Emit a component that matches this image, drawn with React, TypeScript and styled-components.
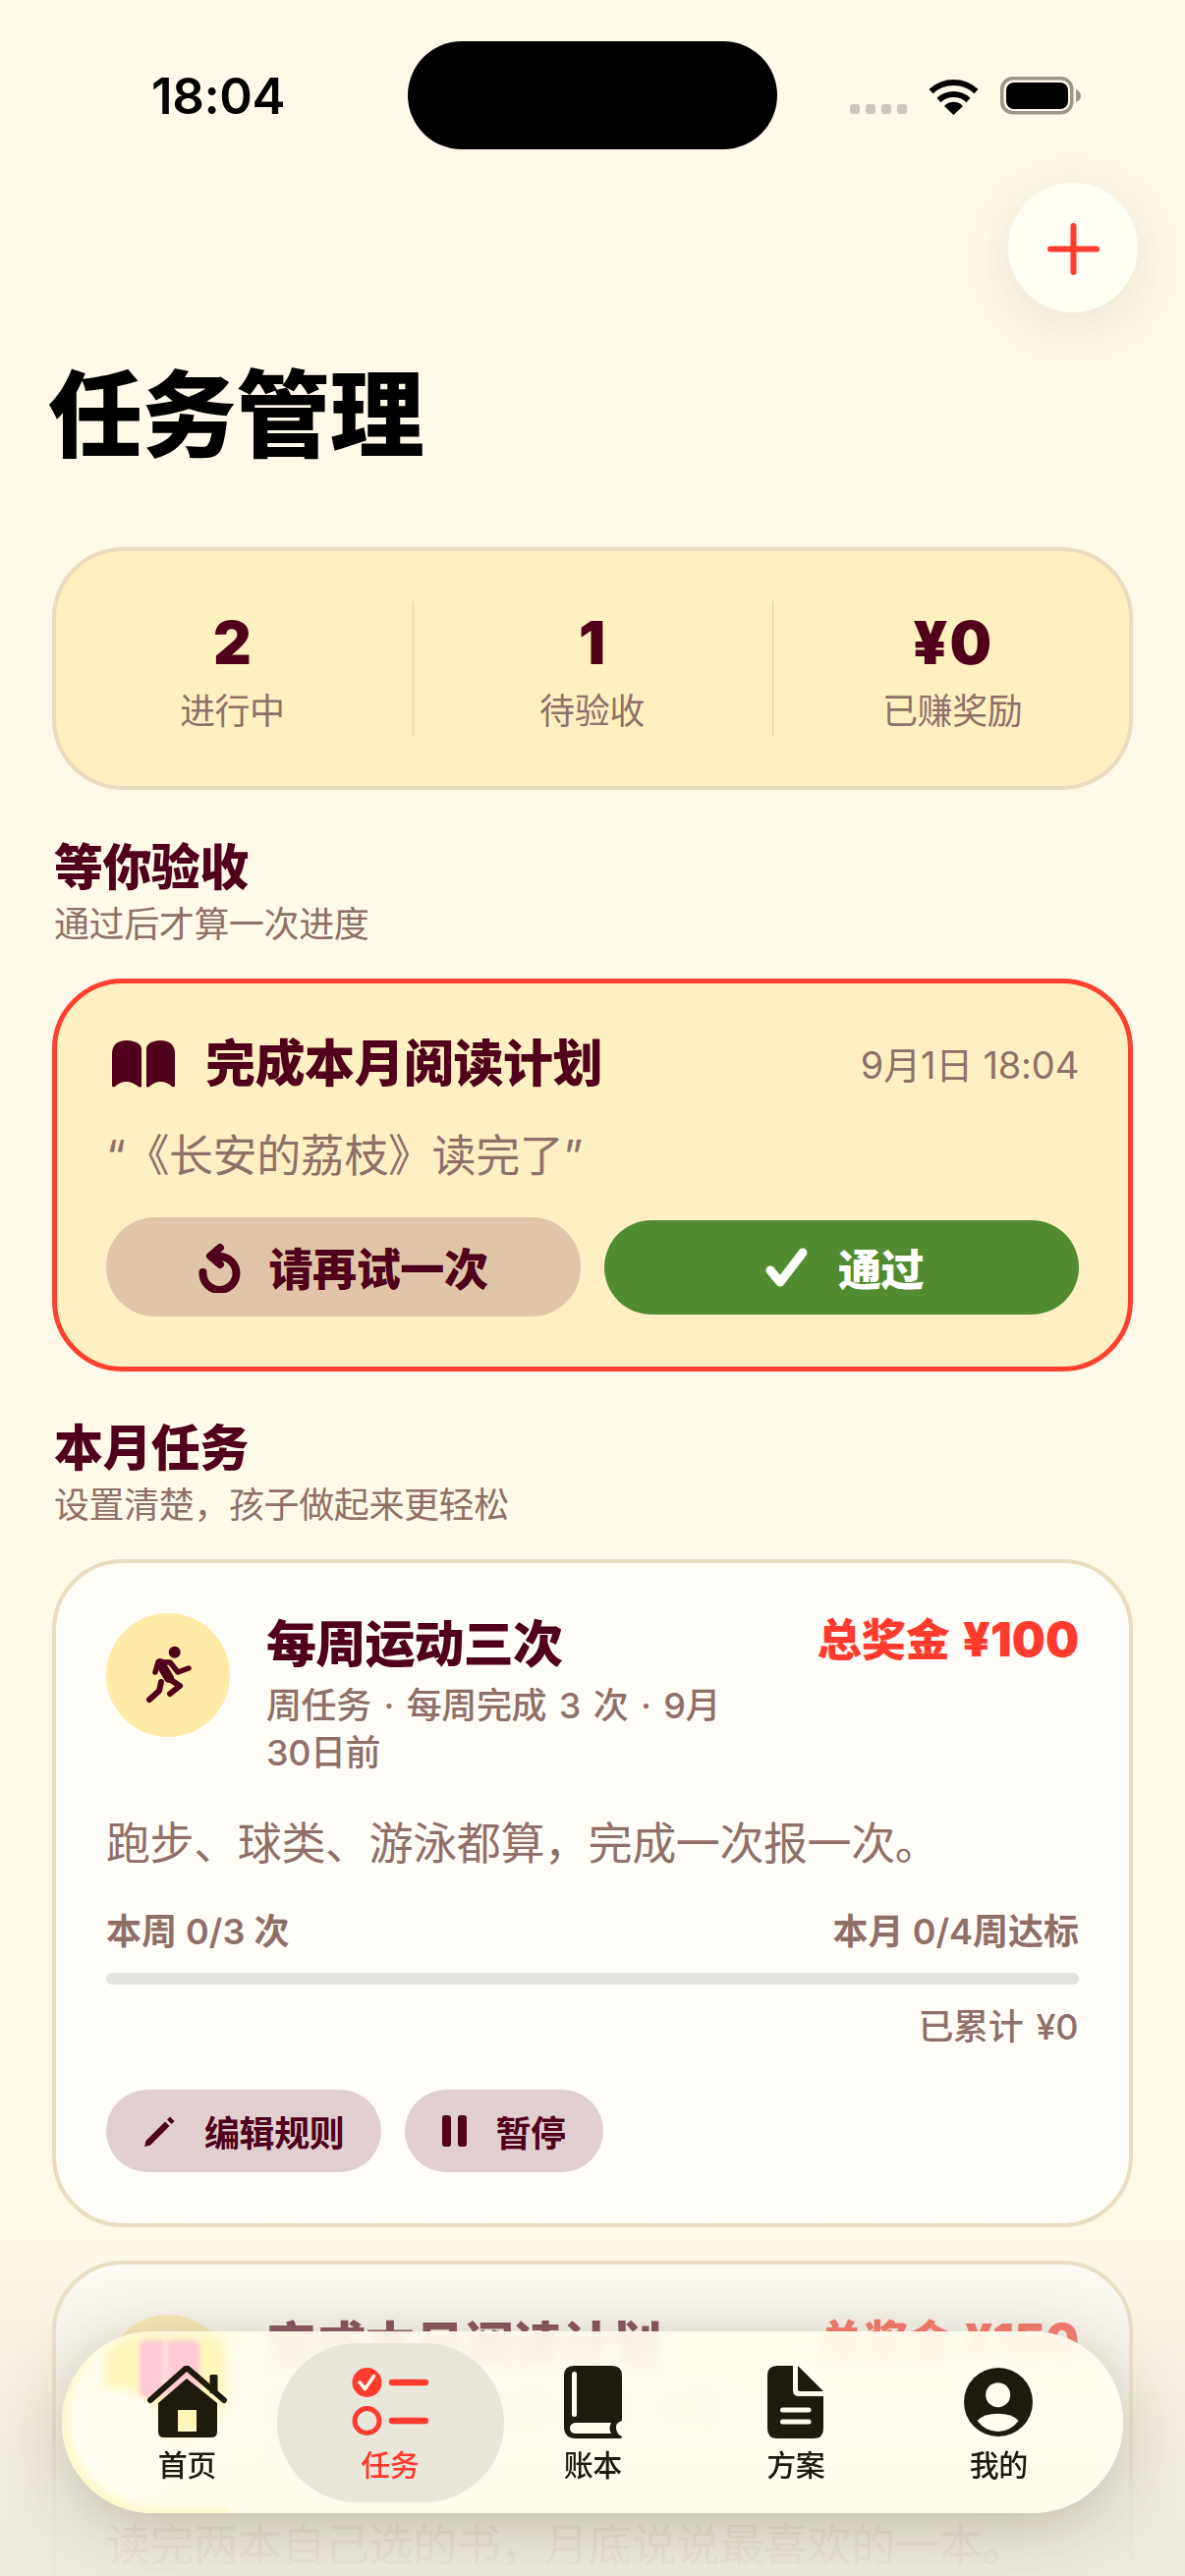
import styled, { createGlobalStyle } from "styled-components";

const maroon = "#50001a";
const muted = "#8f7068";
const red = "#ff3b30";
const ink = "#1f1a0e";
const glass = "#fffcee";

const GlobalStyle = createGlobalStyle`
  html, body {
    margin: 0;
    padding: 0;
    background: #fff9ea;
  }
  * {
    box-sizing: border-box;
  }
`;

const Page = styled.div`
  position: relative;
  width: 1206px;
  height: 2622px;
  overflow: hidden;
  background: #fff9ea;
  font-family: Inter, "Noto Sans CJK SC", sans-serif;
  letter-spacing: -0.4px;
  text-spacing-trim: space-all;
`;

const StatusBar = styled.div`
  display: grid;
  grid-template-columns: 415px 376px 1fr;
  align-items: center;
  height: 110px;
  margin-top: 42px;
`;

const Time = styled.div`
  padding-left: 154px;
  font-size: 51px;
  font-weight: 600;
  color: #000;
  letter-spacing: -0.4px;
`;

const Island = styled.div`
  height: 110px;
  border-radius: 55px;
  background: #000;
`;

const StatusIcons = styled.div`
  display: flex;
  align-items: flex-end;
  padding-left: 74px;
  height: 39px;
`;

const Dots = styled.div`
  display: flex;
  gap: 6px;
  margin-right: 22px;
  margin-bottom: 1px;
`;

const Dot = styled.span`
  width: 10px;
  height: 10px;
  border-radius: 3px;
  background: #cbc7ba;
`;

const Battery = styled.svg`
  margin-left: 22px;
  display: block;
`;

const Header = styled.div`
  display: flex;
  justify-content: flex-end;
  padding: 34px 48px 0 0;
`;

const AddButton = styled.button`
  display: flex;
  align-items: center;
  justify-content: center;
  width: 132px;
  height: 132px;
  padding: 0;
  border: 0;
  border-radius: 50%;
  background: #fffef2;
  box-shadow: 0 12px 54px rgba(90, 70, 30, 0.12);
`;

const PageTitle = styled.h1`
  margin: 47px 0 0 49px;
  font-size: 96px;
  line-height: 115px;
  font-weight: 900;
  letter-spacing: -0.4px;
  color: #000;
`;

const Content = styled.div`
  padding: 0 53px;
`;

const StatsCard = styled.div`
  display: grid;
  grid-template-columns: repeat(3, 1fr);
  margin-top: 77px;
  height: 247px;
  padding: 55px 0;
  border-radius: 72px;
  background: #fef0bf;
  box-shadow: inset 0 0 0 4px #e9dcc0;
`;

const Stat = styled.div<{ $divided?: boolean }>`
  display: flex;
  flex-direction: column;
  align-items: center;
  padding: 12px ${(p) => (p.$divided ? "2px" : "0")} 0 0;
  border-left: ${(p) => (p.$divided ? "1px solid #dccfae" : "0")};
`;

const StatValue = styled.div`
  padding-left: 2px;
  font-size: 60px;
  line-height: 60px;
  font-weight: 900;
  letter-spacing: 2px;
  color: ${maroon};
`;

const StatLabel = styled.div`
  margin-top: 18px;
  font-size: 36px;
  line-height: 44px;
  color: ${muted};
`;

const Section = styled.div<{ $top: number }>`
  margin-top: ${(p) => p.$top}px;
  padding-left: 2px;
`;

const SectionTitle = styled.h2`
  margin: 0;
  font-size: 50px;
  line-height: 60px;
  font-weight: 900;
  letter-spacing: -0.6px;
  color: ${maroon};
`;

const SectionHint = styled.div`
  margin-top: 6px;
  font-size: 36px;
  line-height: 44px;
  color: ${muted};
`;

const ReviewCard = styled.div`
  margin-top: 33px;
  height: 400px;
  padding: 52px 50px 0;
  border: 5px solid #ff4030;
  border-radius: 72px;
  background: #fef0c2;
`;

const ReviewHead = styled.div`
  display: flex;
  align-items: center;
  height: 60px;
  padding-left: 6px;
`;

const ReviewTitle = styled.div`
  margin-left: 31px;
  flex: 1;
  font-size: 51px;
  line-height: 60px;
  font-weight: 900;
  letter-spacing: -0.5px;
  color: ${maroon};
`;

const ReviewDate = styled.div`
  padding-bottom: 4px;
  font-size: 38px;
  letter-spacing: -0.2px;
  color: ${muted};
`;

const Quote = styled.div`
  margin-top: 34px;
  font-size: 45px;
  line-height: 60px;
  letter-spacing: -0.4px;
  color: ${muted};
`;

const ReviewActions = styled.div`
  display: grid;
  grid-template-columns: 1fr 1fr;
  gap: 24px;
  align-items: center;
  margin-top: 32px;
`;

const ReviewButton = styled.button<{ $approve?: boolean }>`
  display: flex;
  align-items: center;
  justify-content: center;
  gap: ${(p) => (p.$approve ? "30px" : "27px")};
  height: ${(p) => (p.$approve ? "96px" : "101px")};
  padding: 0 0 0 ${(p) => (p.$approve ? "6px" : "0")};
  border: 0;
  border-radius: 50px;
  background: ${(p) => (p.$approve ? "#528c30" : "#e0c5a8")};
  color: ${(p) => (p.$approve ? "#fff" : maroon)};
  font-family: inherit;
  font-size: ${(p) => (p.$approve ? "44px" : "45px")};
  font-weight: 900;
  letter-spacing: -0.4px;
`;

const TaskCard = styled.div`
  margin-top: 33px;
  padding: 51px 51px 52px;
  border: 4px solid #e9dcc0;
  border-radius: 72px;
  background: #fffdf7;

  & + & {
    margin-top: 34px;
  }
`;

const TaskHead = styled.div`
  display: flex;
  align-items: flex-start;
`;

const TaskIcon = styled.div`
  display: flex;
  flex-shrink: 0;
  align-items: center;
  justify-content: center;
  width: 126px;
  height: 126px;
  border-radius: 50%;
  background: #ffeaa8;
`;

const TaskText = styled.div`
  flex: 1;
  margin-left: 37px;
`;

const TaskTitle = styled.div`
  margin-top: 2px;
  font-size: 51px;
  line-height: 60px;
  font-weight: 900;
  letter-spacing: -0.8px;
  color: ${maroon};
`;

const TaskMeta = styled.div`
  margin-top: 8px;
  max-width: 480px;
  font-size: 36px;
  line-height: 48px;
  font-weight: 500;
  word-spacing: 3.5px;
  color: ${muted};
`;

const Reward = styled.div`
  flex-shrink: 0;
  margin-top: 1px;
  font-size: 45px;
  line-height: 52px;
  font-weight: 900;
  letter-spacing: 0;
  color: ${red};
`;

const RewardAmount = styled.span`
  margin-left: 13px;
  font-size: 48px;
`;

const TaskDesc = styled.div`
  margin-top: 39px;
  font-size: 45px;
  line-height: 60px;
  color: ${muted};
`;

const ProgressLabels = styled.div`
  display: flex;
  justify-content: space-between;
  margin-top: 37px;
  font-size: 36px;
  line-height: 44px;
  font-weight: 600;
  letter-spacing: 0;
  color: ${muted};
`;

const ProgressTrack = styled.div`
  height: 12px;
  margin-top: 20px;
  border-radius: 6px;
  background: #e3e2de;
`;

const Earned = styled.div`
  margin-top: 21px;
  padding-right: 1px;
  font-size: 36px;
  line-height: 44px;
  font-weight: 500;
  word-spacing: 4px;
  text-align: right;
  color: ${muted};
`;

const TaskActions = styled.div`
  display: flex;
  gap: 24px;
  margin-top: 42px;
`;

const TaskButton = styled.button`
  display: flex;
  align-items: center;
  gap: 29px;
  height: 84px;
  padding: 0 38px;
  border: 0;
  border-radius: 42px;
  background: #e2cfd0;
  color: ${maroon};
  font-family: inherit;
  font-size: 36px;
  font-weight: 700;
  letter-spacing: -0.4px;
`;

const BottomVeil = styled.div`
  position: absolute;
  left: 0;
  right: 0;
  bottom: 0;
  height: 362px;
  pointer-events: none;
  background: linear-gradient(
    to bottom,
    rgba(238, 234, 222, 0) 0%,
    rgba(238, 234, 222, 0.36) 29%,
    rgba(238, 234, 222, 0.92) 85%,
    rgba(238, 234, 222, 0.95) 100%
  );
`;

const TabBar = styled.nav`
  position: absolute;
  left: 63px;
  top: 2373px;
  display: grid;
  grid-template-columns: repeat(5, 206.5px);
  width: 1080px;
  height: 185px;
  padding: 35px 24px 0;
  border-radius: 92px;
  overflow: hidden;
  background: rgba(255, 252, 238, 0.93);
  backdrop-filter: blur(7px);
  box-shadow: 0 14px 70px rgba(70, 60, 30, 0.28);
`;

const GlassYellow = styled.div`
  position: absolute;
  left: 44px;
  top: 4px;
  width: 122px;
  height: 102px;
  border-radius: 30px 10px 50px 30px;
  background: #fff6b8;
  filter: blur(6px);
`;

const GlassLobe = styled.div`
  position: absolute;
  left: 8px;
  top: 58px;
  width: 96px;
  height: 112px;
  border-radius: 48px 48px 40px 60px;
  background: #fffcf2;
  filter: blur(5px);
`;

const GlassRim = styled.div`
  position: absolute;
  left: 0;
  top: 0;
  width: 170px;
  height: 185px;
  border-radius: 92px 0 0 92px;
  box-shadow: inset 6px -5px 8px #fff8c8;
`;

const GlassPink = styled.div`
  position: absolute;
  left: 79px;
  top: 9px;
  width: 61px;
  height: 58px;
  border-radius: 6px;
  background: linear-gradient(to right, #ffcbd6 0 40%, #ffe3d8 40% 47%, #ffcbd6 47%);
  filter: blur(2px);
`;

const Tab = styled.div<{ $active?: boolean }>`
  position: relative;
  display: flex;
  flex-direction: column;
  align-items: center;
  color: ${(p) => (p.$active ? red : ink)};

  &::before {
    content: "";
    display: ${(p) => (p.$active ? "block" : "none")};
    position: absolute;
    top: -23px;
    left: -12px;
    width: 231px;
    height: 162px;
    border-radius: 81px;
    background: #e9e7da;
  }
`;

const TabIcon = styled.div`
  position: relative;
  display: flex;
  align-items: center;
  justify-content: center;
  height: 74px;
`;

const TabLabel = styled.div`
  position: relative;
  margin-top: 9px;
  font-size: 30px;
  line-height: 36px;
  font-weight: 500;
`;

const Wifi = () => (
  <svg width="51" height="37" viewBox="0 0 51 37" style={{ display: "block" }}>
    <path d="M2.5 13 A34 34 0 0 1 48.5 13" fill="none" stroke="#000" strokeWidth="6" />
    <path d="M10.5 22 A22 22 0 0 1 40.5 22" fill="none" stroke="#000" strokeWidth="6" />
    <path d="M25.5 37 L16 28 A13 13 0 0 1 35 28 Z" fill="#000" />
  </svg>
);

const BatteryIcon = () => (
  <Battery width="82" height="39" viewBox="0 0 82 39">
    <rect x="1.75" y="1.75" width="71" height="35" rx="11" fill="none" stroke="#9c9789" strokeWidth="3.5" />
    <rect x="6" y="6" width="63" height="27" rx="8" fill="#000" />
    <path d="M77 13 Q82 15 82 19.5 Q82 24 77 26 Z" fill="#9c9789" />
  </Battery>
);

const Plus = () => (
  <svg width="53" height="53" viewBox="0 0 53 53" style={{ marginTop: 3 }}>
    <path d="M26.5 3 V50 M3 26.5 H50" stroke={red} strokeWidth="6" strokeLinecap="round" />
  </svg>
);

const OpenBook = () => (
  <svg width="64" height="48" viewBox="0 0 64 48" style={{ flexShrink: 0 }}>
    <path
      d="M0 14 Q0 0 15 0 Q30 1 30 9 V47 Q29 48 27 47 Q20 42 15 42 Q8 42 3 47 Q0 48 0 46 Z"
      fill={maroon}
    />
    <path
      d="M64 14 Q64 0 49 0 Q35 1 35 9 V47 Q36 48 38 47 Q44 42 49 42 Q56 42 61 47 Q64 48 64 46 Z"
      fill={maroon}
    />
  </svg>
);

const Runner = () => (
  <svg width="70" height="80" viewBox="0 0 70 80" fill="none" stroke={maroon} strokeLinecap="round" strokeLinejoin="round">
    <circle cx="41.7" cy="16.7" r="6" fill={maroon} stroke="none" />
    <path d="M27 28 L36 43" strokeWidth="10" />
    <path d="M22 37 L25 27 H37 L45 37 L56 33" strokeWidth="5.5" />
    <path d="M28 47 L26 56 L16 65" strokeWidth="6" />
    <path d="M35 43 L47 51 L37 59" strokeWidth="6" />
  </svg>
);

const RetryIcon = () => (
  <svg width="44" height="52" viewBox="14 12 44 52" fill="none" stroke={maroon} strokeWidth="8" strokeLinecap="round" strokeLinejoin="round">
    <path d="M18.5 43 A17 17 0 1 0 35 27" />
    <path d="M36 18 L26 26.5 L36 35" fill={maroon} />
  </svg>
);

const CheckIcon = () => (
  <svg width="44" height="42" viewBox="0 0 44 42" fill="none" stroke="#fff" strokeWidth="9" strokeLinecap="round" strokeLinejoin="round">
    <path d="M5 24 L15 36 L38 6" />
  </svg>
);

const PencilIcon = () => (
  <svg width="33" height="33" viewBox="0 0 33 33">
    <path d="M1 32 L2.5 26 L22 6.5 L26.5 11 L7 30.5 Z" fill={maroon} />
    <path d="M24 4.5 L27 1.5 L31.5 6 L28.5 9 Z" fill={maroon} />
  </svg>
);

const PauseIcon = () => (
  <svg width="25" height="32" viewBox="0 0 25 32">
    <rect x="0" y="0" width="9" height="32" rx="3" fill={maroon} />
    <rect x="16" y="0" width="9" height="32" rx="3" fill={maroon} />
  </svg>
);

const HomeIcon = () => (
  <svg width="81" height="74" viewBox="0 0 81 74">
    <path d="M3 35 L40 2 L78 35" fill="none" stroke={ink} strokeWidth="6" strokeLinecap="round" strokeLinejoin="round" />
    <rect x="63.5" y="9" width="8" height="19" rx="1.5" fill={ink} />
    <path
      fillRule="evenodd"
      d="M11 38 L40 13 L71 38 V67 Q71 73 65 73 H17 Q11 73 11 67 Z M31 45 V67 H50 V45 Z"
      fill={ink}
    />
  </svg>
);

const TasksIcon = () => (
  <svg width="78" height="72" viewBox="0 0 78 72">
    <circle cx="15.5" cy="16" r="15" fill={red} />
    <path d="M8 16 L13.5 22.5 L22.5 9.5" fill="none" stroke={glass} strokeWidth="3.5" strokeLinecap="round" strokeLinejoin="round" />
    <path d="M41 16 H75 M41 55 H75" stroke={red} strokeWidth="6.5" strokeLinecap="round" />
    <circle cx="15.5" cy="55" r="12.5" fill="none" stroke={red} strokeWidth="5" />
  </svg>
);

const LedgerIcon = () => (
  <svg width="59" height="74" viewBox="0 0 59 74">
    <path
      d="M10 0 H49 Q59 0 59 10 V56 Q52 58 53 64 Q54 70 59 72 Q59 74 56 74 H12 Q0 74 0 62 V10 Q0 0 10 0 Z"
      fill={ink}
    />
    <rect x="8" y="6" width="5" height="46" rx="2.5" fill={glass} />
    <path d="M13 58 H48 Q45 64 48 69 H13 Q6 69 6 63.5 Q6 58 13 58 Z" fill={glass} />
  </svg>
);

const PlanIcon = () => (
  <svg width="57" height="74" viewBox="0 0 57 74">
    <path d="M10 0 H26 V25 Q26 31 32 31 H57 V64 Q57 74 47 74 H10 Q0 74 0 64 V10 Q0 0 10 0 Z" fill={ink} />
    <path d="M31 0 L57 26 H33 Q31 26 31 24 Z" fill={ink} />
    <path d="M15.5 45 H42 M15.5 57 H42" stroke={glass} strokeWidth="5" strokeLinecap="round" />
  </svg>
);

const MeIcon = () => (
  <svg width="70" height="70" viewBox="0 0 70 70">
    <circle cx="35" cy="35" r="35" fill={ink} />
    <circle cx="34.7" cy="27.7" r="12.5" fill={glass} />
    <path d="M13.6 54 Q20 46.7 34.7 46.7 Q49 46.7 55.7 54 Q47 65 34.7 65 Q22 65 13.6 54 Z" fill={glass} />
  </svg>
);

const tabs = [
  { label: "首页", icon: <HomeIcon /> },
  { label: "任务", icon: <TasksIcon />, active: true },
  { label: "账本", icon: <LedgerIcon /> },
  { label: "方案", icon: <PlanIcon /> },
  { label: "我的", icon: <MeIcon /> },
];

const tasks = [
  {
    title: "每周运动三次",
    amount: "¥100",
    meta: "周任务 · 每周完成 3 次 · 9月30日前",
    desc: "跑步、球类、游泳都算，完成一次报一次。",
    week: "本周 0/3 次",
    month: "本月 0/4周达标",
    earned: "已累计 ¥0",
    icon: <Runner />,
  },
  {
    title: "完成本月阅读计划",
    amount: "¥150",
    meta: "月任务 · 本月完成 2 次 · 9月30日前",
    desc: "读完两本自己选的书，月底说说最喜欢的一本。",
    week: "本月 0/2 次",
    month: "",
    earned: "已累计 ¥0",
    icon: <OpenBook />,
  },
];

const App = () => {
  return (
    <Page>
      <GlobalStyle />
      <StatusBar>
        <Time>18:04</Time>
        <Island />
        <StatusIcons>
          <Dots>
            <Dot />
            <Dot />
            <Dot />
            <Dot />
          </Dots>
          <Wifi />
          <BatteryIcon />
        </StatusIcons>
      </StatusBar>

      <Header>
        <AddButton>
          <Plus />
        </AddButton>
      </Header>
      <PageTitle>任务管理</PageTitle>

      <Content>
        <StatsCard>
          <Stat>
            <StatValue>2</StatValue>
            <StatLabel>进行中</StatLabel>
          </Stat>
          <Stat $divided>
            <StatValue>1</StatValue>
            <StatLabel>待验收</StatLabel>
          </Stat>
          <Stat $divided>
            <StatValue>¥0</StatValue>
            <StatLabel>已赚奖励</StatLabel>
          </Stat>
        </StatsCard>

        <Section $top={49}>
          <SectionTitle>等你验收</SectionTitle>
          <SectionHint>通过后才算一次进度</SectionHint>
        </Section>

        <ReviewCard>
          <ReviewHead>
            <OpenBook />
            <ReviewTitle>完成本月阅读计划</ReviewTitle>
            <ReviewDate>9月1日 18:04</ReviewDate>
          </ReviewHead>
          <Quote>“《长安的荔枝》读完了”</Quote>
          <ReviewActions>
            <ReviewButton>
              <RetryIcon />
              请再试一次
            </ReviewButton>
            <ReviewButton $approve>
              <CheckIcon />
              通过
            </ReviewButton>
          </ReviewActions>
        </ReviewCard>

        <Section $top={48}>
          <SectionTitle>本月任务</SectionTitle>
          <SectionHint>设置清楚，孩子做起来更轻松</SectionHint>
        </Section>

        {tasks.map((task) => (
          <TaskCard key={task.title}>
            <TaskHead>
              <TaskIcon>{task.icon}</TaskIcon>
              <TaskText>
                <TaskTitle>{task.title}</TaskTitle>
                <TaskMeta>{task.meta}</TaskMeta>
              </TaskText>
              <Reward>
                总奖金
                <RewardAmount>{task.amount}</RewardAmount>
              </Reward>
            </TaskHead>
            <TaskDesc>{task.desc}</TaskDesc>
            <ProgressLabels>
              <span>{task.week}</span>
              <span>{task.month}</span>
            </ProgressLabels>
            <ProgressTrack />
            <Earned>{task.earned}</Earned>
            <TaskActions>
              <TaskButton>
                <PencilIcon />
                编辑规则
              </TaskButton>
              <TaskButton>
                <PauseIcon />
                暂停
              </TaskButton>
            </TaskActions>
          </TaskCard>
        ))}
      </Content>

      <BottomVeil />
      <TabBar>
        <GlassYellow />
        <GlassLobe />
        <GlassRim />
        <GlassPink />
        {tabs.map((tab) => (
          <Tab key={tab.label} $active={tab.active}>
            <TabIcon>{tab.icon}</TabIcon>
            <TabLabel>{tab.label}</TabLabel>
          </Tab>
        ))}
      </TabBar>
    </Page>
  );
};

export default App;
